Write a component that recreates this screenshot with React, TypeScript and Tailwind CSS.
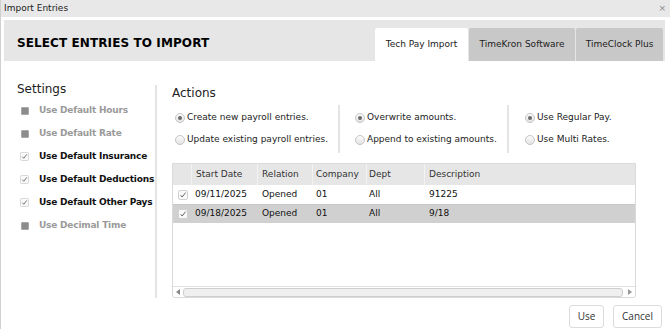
import React from 'react';

const font = { fontFamily: '"DejaVu Sans", Verdana, sans-serif' };

function DisabledBox() {
  return <span className="inline-block w-[8px] h-[8px] bg-[#8c8c8c] border border-[#a8a8a8] rounded-[1px]" />;
}

function CheckBox({ size = 10 }: { size?: number }) {
  return (
    <svg width={size} height={size} viewBox="0 0 10 10" className="shrink-0">
      <rect x="0.5" y="0.5" width="9" height="9" rx="1.5" fill="#fafafa" stroke="#d2d2d2" />
      <path d="M2.6 5.2 L4.2 7 L7.6 2.6" fill="none" stroke="#555" strokeWidth="0.9" />
    </svg>
  );
}

function Radio({ checked }: { checked?: boolean }) {
  return (
    <svg width="10" height="10" viewBox="0 0 10 10" className="shrink-0">
      <defs>
        <linearGradient id="rg" x1="0" y1="0" x2="0" y2="1">
          <stop offset="0" stopColor="#fdfdfd" />
          <stop offset="1" stopColor="#e2e2e2" />
        </linearGradient>
      </defs>
      <circle cx="5" cy="5" r="4.5" fill="url(#rg)" stroke="#c4c4c4" />
      {checked && <circle cx="5" cy="5" r="2" fill="#6b6b6b" />}
    </svg>
  );
}

const settings = [
  { label: 'Use Default Hours', on: false },
  { label: 'Use Default Rate', on: false },
  { label: 'Use Default Insurance', on: true },
  { label: 'Use Default Deductions', on: true },
  { label: 'Use Default Other Pays', on: true },
  { label: 'Use Decimal Time', on: false },
];

const rows = [
  { date: '09/11/2025', rel: 'Opened', co: '01', dept: 'All', desc: '91225' },
  { date: '09/18/2025', rel: 'Opened', co: '01', dept: 'All', desc: '9/18' },
];

export default function App() {
  return (
    <div style={font} className="w-[670px] h-[329px] bg-white border-l border-[#d0d0d0] overflow-hidden text-[#222]">
      {/* Title bar */}
      <div className="h-[17px] bg-[#e8e8e8] flex items-center justify-between pl-[3px] pr-[4px] text-[9px] text-[#222]">
        <span>Import Entries</span>
        <span className="text-[9px] text-[#888] leading-none">×</span>
      </div>

      {/* Header band */}
      <div className="mt-[3px] ml-[3px] mr-[5px] h-[41px] bg-[#e6e6e6] flex justify-between">
        <div className="self-center pl-[13px] pt-[4px] text-[12px] font-bold text-black tracking-[0.1px]">SELECT ENTRIES TO IMPORT</div>
        <div className="flex items-end gap-[1px] pr-[2px]">
          <div className="h-[33px] w-[93px] bg-white rounded-t-[2px] flex items-center justify-center text-[9px] text-[#222]">Tech Pay Import</div>
          <div className="h-[33px] w-[106px] bg-[#c8c8c8] rounded-t-[2px] flex items-center justify-center text-[9px] text-[#222]">TimeKron Software</div>
          <div className="h-[33px] w-[87px] bg-[#c8c8c8] rounded-t-[2px] flex items-center justify-center text-[9px] text-[#222]">TimeClock Plus</div>
        </div>
      </div>

      {/* Body */}
      <div className="flex h-[237px]">
        <div className="w-[154px] pl-[16px] pt-[21px]">
          <div className="text-[12px] leading-[14px] text-[#222] mb-[3px]">Settings</div>
          {settings.map((s) => (
            <div key={s.label} className="h-[23px] flex items-center gap-[10px] pl-[3px]">
              <span className="w-[9px] flex justify-center">{s.on ? <CheckBox size={9} /> : <DisabledBox />}</span>
              <span className={`text-[9px] font-bold whitespace-nowrap tracking-[-0.2px] ${s.on ? 'text-[#111]' : 'text-[#9a9a9a]'}`}>{s.label}</span>
            </div>
          ))}
        </div>
        <div className="w-[2px] bg-[#e4e4e4] mt-[24px] h-[213px]" />

        <div className="flex-1 pl-[15px] pt-[25px] flex flex-col">
          <div className="text-[12px] leading-[14px] text-[#222]">Actions</div>
          <div className="mt-[5px] h-[48px] flex text-[9px] text-[#222]">
            <div className="w-[166px] flex flex-col justify-center pl-[3px]">
              <div className="h-[22px] flex items-center gap-[2px]"><Radio checked /><span>Create new payroll entries.</span></div>
              <div className="h-[22px] flex items-center gap-[2px]"><Radio /><span>Update existing payroll entries.</span></div>
            </div>
            <div className="w-[2px] bg-[#e4e4e4]" />
            <div className="w-[167px] flex flex-col justify-center pl-[15px]">
              <div className="h-[22px] flex items-center gap-[2px]"><Radio checked /><span>Overwrite amounts.</span></div>
              <div className="h-[22px] flex items-center gap-[2px]"><Radio /><span>Append to existing amounts.</span></div>
            </div>
            <div className="w-[2px] bg-[#e4e4e4]" />
            <div className="flex flex-col justify-center pl-[16px]">
              <div className="h-[22px] flex items-center gap-[2px]"><Radio checked /><span>Use Regular Pay.</span></div>
              <div className="h-[22px] flex items-center gap-[2px]"><Radio /><span>Use Multi Rates.</span></div>
            </div>
          </div>

          {/* Table */}
          <div className="mt-[10px] w-[464px] h-[135px] border border-[#dadada] rounded-b-[3px] flex flex-col text-[9px]">
            <div className="h-[21px] bg-[#e6e6e6] flex text-[#333]">
              <div className="w-[19px] border-r border-[#f2f2f2]" />
              <div className="w-[66px] pl-[4px] flex items-center border-r border-[#f2f2f2]">Start Date</div>
              <div className="w-[55px] pl-[4px] flex items-center border-r border-[#f2f2f2]">Relation</div>
              <div className="w-[54px] pl-[3px] flex items-center border-r border-[#f2f2f2]">Company</div>
              <div className="w-[58px] pl-[2px] flex items-center border-r border-[#f2f2f2]">Dept</div>
              <div className="flex-1 pl-[4px] flex items-center">Description</div>
            </div>
            {rows.map((r, i) => (
              <div key={r.date} className={`h-[19px] flex text-[#111] ${i === 1 ? 'bg-[#d0d0d0] border-t border-[#c8c8c8]' : 'bg-white'}`}>
                <div className="w-[19px] flex items-center justify-center"><CheckBox /></div>
                <div className="w-[66px] pl-[3px] flex items-center">{r.date}</div>
                <div className="w-[55px] pl-[4px] flex items-center">{r.rel}</div>
                <div className="w-[54px] pl-[3px] flex items-center">{r.co}</div>
                <div className="w-[58px] pl-[2px] flex items-center">{r.dept}</div>
                <div className="flex-1 pl-[4px] flex items-center">{r.desc}</div>
              </div>
            ))}
            <div className="flex-1" />
            <div className="h-[11px] border-t border-[#e2e2e2] flex items-center px-[3px] gap-[3px]">
              <span className="w-0 h-0 border-y-[3px] border-y-transparent border-r-[4px] border-r-[#888]" />
              <div className="flex-1 h-[9px] bg-[#efefef] border border-[#cfcfcf] rounded-[3px]" />
              <span className="w-0 h-0 border-y-[3px] border-y-transparent border-l-[4px] border-l-[#999] ml-[2px]" />
            </div>
          </div>
        </div>
      </div>

      {/* Footer */}
      <div className="flex justify-end gap-[9px] pr-[8px] mt-[7px]" style={{ fontFamily: '"Open Sans", sans-serif' }}>
        <button className="w-[35px] h-[23px] bg-white border border-[#dcdcdc] rounded-[3px] text-[10px] text-[#333]">Use</button>
        <button className="w-[49px] h-[23px] bg-white border border-[#dcdcdc] rounded-[3px] text-[10px] text-[#333]">Cancel</button>
      </div>
    </div>
  );
}
